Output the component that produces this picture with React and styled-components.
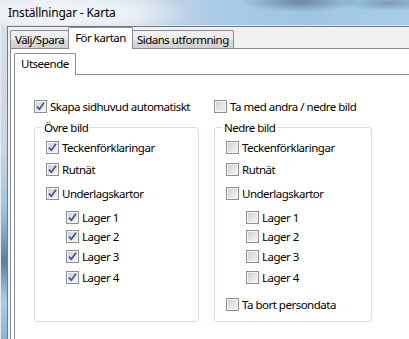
import styled, { createGlobalStyle } from "styled-components";

const GlobalStyle = createGlobalStyle`
  html, body {
    margin: 0;
    padding: 0;
    overflow: hidden;
    background: #f0f0f0;
  }
  body {
    font-family: "Noto Sans", "Liberation Sans", sans-serif;
    font-size: 11.5px;
    letter-spacing: -0.5px;
    color: #000;
  }
`;

const Window = styled.div`
  width: 409px;
  height: 339px;
  display: flex;
  flex-direction: column;
  overflow: hidden;
`;

const TitleBar = styled.div`
  height: 25px;
  line-height: 25px;
  padding-left: 8px;
  font-size: 12px;
  letter-spacing: -0.2px;
  border-bottom: 1px solid #dde6ee;
  background:
    radial-gradient(ellipse 130px 26px at 62px 13px, rgba(246, 248, 250, 0.95) 0%, rgba(240, 244, 248, 0.8) 55%, rgba(230, 238, 245, 0) 100%),
    radial-gradient(ellipse 60px 10px at 300px 2px, rgba(60, 85, 110, 0.55), rgba(60, 85, 110, 0) 100%),
    radial-gradient(ellipse 50px 8px at 390px 3px, rgba(70, 95, 120, 0.45), rgba(70, 95, 120, 0) 100%),
    linear-gradient(to right, #d9e0e7 0%, #c9d8e5 35%, #a7cae6 55%, #9ec6e4 75%, #a6cde8 100%);
`;

const Body = styled.div`
  flex: 1;
  display: flex;
  min-height: 0;
`;

const FrameEdge = styled.div`
  width: 7px;
  background: linear-gradient(to bottom, #d9e0e7 0%, #cbd6e0 40%, #9cc0dc 60%, #5f7f9b 75%, #a9cde9 88%, #8eb3d1 100%);
  border-left: 1px solid #e8edf2;
  box-sizing: border-box;
`;

const Client = styled.div`
  flex: 1;
  display: flex;
  flex-direction: column;
  background: #f0f0f0;
  border-top: 1px solid #6f7a86;
  border-left: 1px solid #6f7a86;
  padding-left: 2px;
  min-width: 0;
`;

const TabRow = styled.div`
  display: flex;
  align-items: flex-end;
  height: 21px;
`;

const Tab = styled.div`
  box-sizing: border-box;
  height: ${(p) => (p.$active ? 22 : 18)}px;
  margin-bottom: ${(p) => (p.$active ? -1 : 0)}px;
  padding: 0 ${(p) => (p.$active ? 6 : 4)}px;
  padding-top: ${(p) => (p.$active ? 2 : 1)}px;
  line-height: 15px;
  border: 1px solid #898c95;
  border-bottom: none;
  border-radius: 2px 2px 0 0;
  background: ${(p) =>
    p.$active
      ? "#ffffff"
      : "linear-gradient(to bottom, #f2f2f2 0%, #ebebeb 50%, #dddddd 51%, #cfcfcf 100%)"};
  position: relative;
  z-index: ${(p) => (p.$active ? 1 : 0)};
  white-space: nowrap;
  & + & {
    margin-left: -1px;
  }
`;

const Panel = styled.div`
  flex: 1;
  display: flex;
  flex-direction: column;
  background: #fff;
  border-top: 1px solid #898c95;
  border-left: 1px solid #898c95;
  padding: ${(p) => p.$pad || "0"};
`;

const Grid = styled.div`
  display: grid;
  grid-template-columns: 165px 158px;
  column-gap: 15px;
  row-gap: 6px;
  align-items: stretch;
`;

const Group = styled.fieldset`
  margin: 0;
  padding: 5px 11px 9px 11px;
  border: 1px solid #d5dfe5;
  border-radius: 3px;
  min-width: 0;
`;

const Legend = styled.legend`
  padding: 0 2px;
  margin-left: -4px;
  line-height: 15px;
`;

const Row = styled.label`
  display: flex;
  align-items: center;
  gap: 3px;
  height: 15px;
  line-height: 15px;
  margin-top: ${(p) => p.$mt || 0}px;
  margin-left: ${(p) => p.$indent || 0}px;
  white-space: nowrap;
`;

const Box = styled.span`
  box-sizing: border-box;
  width: 13px;
  height: 13px;
  flex: none;
  border: 1px solid #8e8f8f;
  background: linear-gradient(135deg, #cbcdd0 0%, #e4e5e6 55%, #f6f6f6 100%);
  box-shadow: inset 0 0 0 1px #f4f4f4;
  display: flex;
  align-items: center;
  justify-content: center;
`;

function Check({ checked, indent, mt, children }) {
  return (
    <Row $indent={indent} $mt={mt}>
      <Box>
        {checked && (
          <svg width="11" height="11" viewBox="0 0 11 11">
            <path
              d="M2 5.6 L4.3 8.3 L9 1.8"
              fill="none"
              stroke="#3a5597"
              strokeWidth="1.7"
              strokeLinejoin="round"
            />
          </svg>
        )}
      </Box>
      <span>{children}</span>
    </Row>
  );
}

function ImageGroup({ title, checked, extra }) {
  return (
    <Group>
      <Legend>{title}</Legend>
      <Check checked={checked}>Teckenförklaringar</Check>
      <Check checked={checked} mt={7}>Rutnät</Check>
      <Check checked={checked} mt={9}>Underlagskartor</Check>
      <Check checked={checked} indent={20} mt={9}>Lager 1</Check>
      <Check checked={checked} indent={20} mt={4}>Lager 2</Check>
      <Check checked={checked} indent={20} mt={5}>Lager 3</Check>
      <Check checked={checked} indent={20} mt={6}>Lager 4</Check>
      {extra && <Check mt={12}>{extra}</Check>}
    </Group>
  );
}

export default function App() {
  return (
    <>
      <GlobalStyle />
      <Window>
        <TitleBar>Inställningar - Karta</TitleBar>
        <Body>
          <FrameEdge />
          <Client>
            <TabRow>
              <Tab>Välj/Spara</Tab>
              <Tab $active>För kartan</Tab>
              <Tab>Sidans utformning</Tab>
            </TabRow>
            <Panel $pad="4px 0 0 3px">
              <TabRow>
                <Tab $active>Utseende</Tab>
              </TabRow>
              <Panel $pad="24px 0 0 19px">
                <Grid>
                  <Check checked>Skapa sidhuvud automatiskt</Check>
                  <Check>Ta med andra / nedre bild</Check>
                  <ImageGroup title="Övre bild" checked />
                  <ImageGroup title="Nedre bild" extra="Ta bort persondata" />
                </Grid>
              </Panel>
            </Panel>
          </Client>
        </Body>
      </Window>
    </>
  );
}
